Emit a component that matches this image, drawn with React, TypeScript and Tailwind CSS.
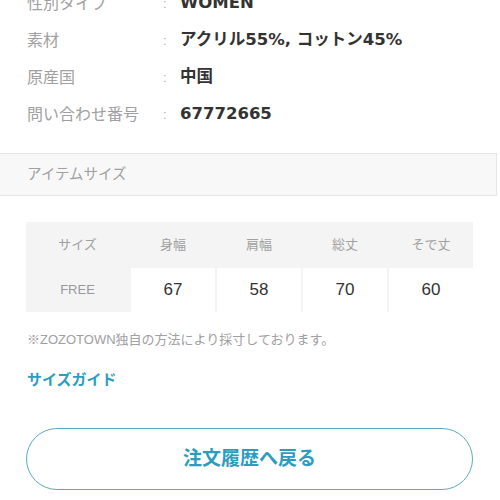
import React from "react";

const font = { fontFamily: '"Liberation Sans", "Noto Sans CJK JP", sans-serif' };
const valFont = { fontFamily: '"DejaVu Sans", "Noto Sans CJK JP", sans-serif' };

const rows = [
  ["性別タイプ", "WOMEN"],
  ["素材", "アクリル55%, コットン45%"],
  ["原産国", "中国"],
  ["問い合わせ番号", "67772665"],
];

const heads = ["身幅", "肩幅", "総丈", "そで丈"];
const vals = ["67", "58", "70", "60"];

export default function App() {
  return (
    <div className="w-[500px] h-[500px] overflow-hidden bg-white" style={font}>
      <div className="-mt-[15px] pl-[27px]">
        {rows.map(([l, v]) => (
          <div key={l} className="flex items-center h-[37px]">
            <div className="w-[136px] text-[16px] text-[#a0a0a0]">{l}</div>
            <div className="w-[17px] text-[13px] text-[#b0b0b0]">:</div>
            <div className="text-[16.5px] font-bold text-[#333]" style={valFont}>{v}</div>
          </div>
        ))}
      </div>
      <div className="mt-[20px] w-[497px] h-[43px] bg-[#f8f8f8] border-y border-r border-[#e6e6e6] flex items-center pl-[27px] text-[14.5px] text-[#a0a0a0]">
        アイテムサイズ
      </div>
      <div className="mt-[26px] ml-[26px] w-[447px] bg-[#f4f4f4] grid grid-cols-[103px_1fr_1fr_1fr_1fr] gap-x-[2px]">
        <div className="h-[46px] flex items-center justify-center text-[13px] text-[#a0a0a0]">サイズ</div>
        {heads.map((h) => (
          <div key={h} className="h-[46px] flex items-center justify-center text-[13px] text-[#a0a0a0]">{h}</div>
        ))}
        <div className="h-[44px] flex items-center justify-center text-[13px] text-[#999]">FREE</div>
        {vals.map((v) => (
          <div key={v} className="h-[44px] bg-white flex items-center justify-center text-[17px] text-[#333]">{v}</div>
        ))}
      </div>
      <div className="mt-[20px] pl-[27px] text-[13px] text-[#a0a0a0] h-[16px] leading-[16px] whitespace-nowrap">
        ※ZOZOTOWN独自の方法により採寸しております。
      </div>
      <div className="mt-[22px] pl-[27px] text-[15px] font-bold text-[#2d9cc1] h-[20px] leading-[20px]">
        サイズガイド
      </div>
      <div className="mt-[38px] ml-[26px] w-[447px] h-[62px] rounded-full border border-[#5aaac4] flex items-center justify-center text-[19px] font-bold text-[#2d9cc1]">
        注文履歴へ戻る
      </div>
    </div>
  );
}
